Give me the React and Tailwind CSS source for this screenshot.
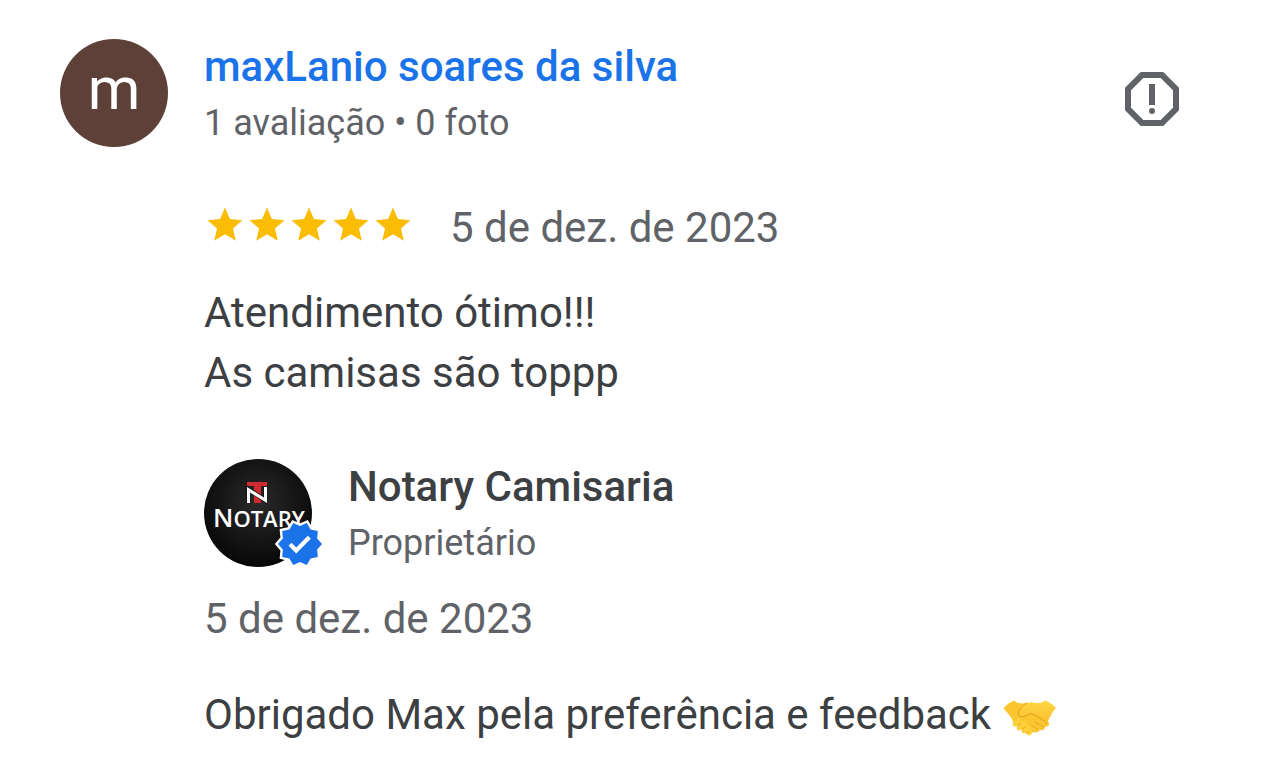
const STAR_PATH =
  "M12 17.27L18.18 21l-1.64-7.03L22 9.24l-7.19-.61L12 2 9.19 8.63 2 9.24l5.46 4.73L5.82 21z";

function Stars({ count }) {
  return (
    <div role="img" aria-label={`${count} estrelas`} className="flex pt-1.5">
      {Array.from({ length: count }).map((_, i) => (
        <svg key={i} viewBox="0 0 24 24" className="size-[42px] fill-[#fbbc04]">
          <path d={STAR_PATH} />
        </svg>
      ))}
    </div>
  );
}

function ReportIcon() {
  return (
    <svg viewBox="0 0 24 24" className="size-[72px] fill-[#5f6368]">
      <path d="M15.73 3H8.27L3 8.27v7.46L8.27 21h7.46L21 15.73V8.27L15.73 3zM19 14.9L14.9 19H9.1L5 14.9V9.1L9.1 5h5.8L19 9.1v5.8z" />
      <path d="M11 7h2v7h-2z" />
      <circle cx="12" cy="16" r="1" />
    </svg>
  );
}

function VerifiedBadge() {
  return (
    <svg viewBox="-1 -1 26 26" className="absolute -right-3.5 -bottom-[3px] size-[52px]">
      <path
        d="M23 12l-2.44-2.79.34-3.69-3.61-.82-1.89-3.2L12 2.96 8.6 1.5 6.71 4.69 3.1 5.5l.34 3.7L1 12l2.44 2.79-.34 3.7 3.61.82L8.6 22.5l3.4-1.47 3.4 1.46 1.89-3.19 3.61-.82-.34-3.69z"
        fill="#1a73e8"
        stroke="#fff"
        strokeWidth="2.4"
        paintOrder="stroke"
      />
      <path d="M10.09 16.72l-3.8-3.81 1.48-1.48 2.32 2.33 5.85-5.87 1.48 1.48z" fill="#fff" />
    </svg>
  );
}

function NotaryLogo() {
  return (
    <svg viewBox="0 0 108 108" className="size-[108px] rounded-full">
      <defs>
        <radialGradient id="notary-bg" cx="50%" cy="40%" r="62%">
          <stop offset="0" stopColor="#2a2a2a" />
          <stop offset="1" stopColor="#060606" />
        </radialGradient>
      </defs>
      <rect width="108" height="108" fill="url(#notary-bg)" />
      {/* red T behind the white N */}
      <path d="M43 23h20v4h-6v17h-7V27h-7z" fill="#cf2a30" />
      <path d="M44 44V30L61 41V28" fill="none" stroke="#161616" strokeWidth="4.5" />
      <path d="M43 44V28l17 10.500V28h3v16L46 33.500V44z" fill="#fff" />
      <text x="9" y="68" fill="#fff" fontFamily="'Open Sans', sans-serif" fontWeight="600" fontSize="26">
        N<tspan fontSize="22">OTARY</tspan>
      </text>
    </svg>
  );
}

function Handshake() {
  return (
    <svg
      role="img"
      aria-label="aperto de mãos"
      viewBox="0 0 54 38"
      className="ml-3 inline-block h-[38px] w-[54px] align-middle"
    >
      <defs>
        <linearGradient id="hand" x1="0" y1="0" x2="0" y2="1">
          <stop offset="0" stopColor="#ffd745" />
          <stop offset="1" stopColor="#fbc02d" />
        </linearGradient>
      </defs>
      {/* left hand, its fingers end at the lower right */}
      <path
        d="M0.500 9.500C3 6 7 3 11 1.500C14 4.500 18 5 23 4L35 12L45 22C47.500 25 45.500 28.500 42 27.500C42.500 30.500 39 32.500 36.500 30.500C36 33.500 32.500 34.500 30 32.500C28 36 24 36 22 33L10 23C9 18 5 15 0.500 9.500z"
        fill="#fcc630"
      />
      {/* right hand with the thumb on top */}
      <path
        d="M53 9C50 5.500 46 3 42 1.500C38 4.500 34 4.500 30 3.500C25 2.500 21 5 17.500 9C14.500 12.500 14 17 17.500 18C21 18.500 24 16.500 27 14.500C32 15.500 37 18.500 43.500 24C46.500 20 48 14 53 9z"
        fill="url(#hand)"
      />
      <path
        d="M24 4C20.500 6 14.500 11 15.500 15.500C16.500 19.500 23 17.500 27 14.500C32 15.500 38 19 44 24.500"
        fill="none"
        stroke="#e09a20"
        strokeWidth="1"
        strokeLinecap="round"
      />
      {/* fingers of the right hand */}
      <g stroke="#ffd03c" strokeWidth="4.6" strokeLinecap="round">
        <path d="M16 21l-4 4" />
        <path d="M21 24l-5 5" />
        <path d="M25 28l-4 4" />
        <path d="M29 31l-3 3" />
      </g>
      <path
        d="M17.500 24.500l-3.500 3M22 28l-3.500 3.500M26 31.500l-2.500 3M31 23l10 5M28 26l8 5M29 31l2 2"
        fill="none"
        stroke="#e09a20"
        strokeWidth="0.7"
        strokeLinecap="round"
      />
    </svg>
  );
}

export default function App() {
  return (
    <article className="bg-white pt-[39px] pr-24 pb-3 pl-[60px] font-['Roboto',sans-serif] text-[42px] leading-[60px] text-[#3c4043]">
      <header className="flex items-center gap-9">
        <div className="flex size-[108px] shrink-0 items-center justify-center rounded-full bg-[#5d4037] pb-2 text-[60px] text-white">
          m
        </div>
        <div className="flex-1">
          <a href="#perfil" className="block leading-[56px] font-medium text-[#1a73e8]">
            maxLanio soares da silva
          </a>
          <p className="mt-1 text-[36px] leading-[48px] text-[#5f6368]">1 avaliação • 0 foto</p>
        </div>
        <button type="button" aria-label="Denunciar avaliação" className="mt-3">
          <ReportIcon />
        </button>
      </header>

      <div className="pl-36">
        <div className="mt-[51px] flex items-start gap-9">
          <Stars count={5} />
          <time dateTime="2023-12-05" className="text-[#5f6368]">5 de dez. de 2023</time>
        </div>

        <p className="mt-[25px]">
          Atendimento ótimo!!!
          <br />
          As camisas são toppp
        </p>

        <section className="mt-14">
          <div className="flex items-center gap-9">
            <div className="relative shrink-0">
              <NotaryLogo />
              <VerifiedBadge />
            </div>
            <div>
              <h2 className="leading-[56px] font-medium">Notary Camisaria</h2>
              <p className="mt-1 text-[36px] leading-[48px] text-[#5f6368]">Proprietário</p>
            </div>
          </div>
          <time dateTime="2023-12-05" className="mt-[22px] block text-[#5f6368]">5 de dez. de 2023</time>
          <p className="mt-9">
            Obrigado Max pela preferência e feedback
            <Handshake />
          </p>
        </section>
      </div>
    </article>
  );
}
